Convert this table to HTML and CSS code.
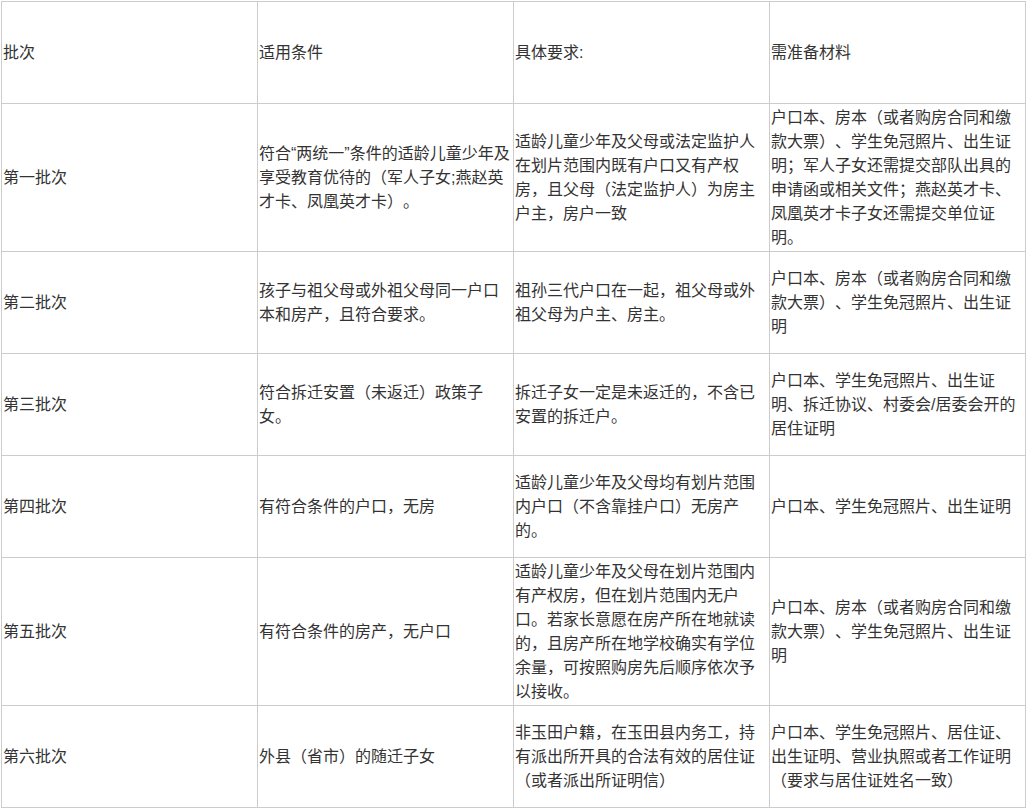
FILE: index.html
```html
<!DOCTYPE html>
<html lang="zh-CN">
<head>
<meta charset="utf-8">
<title>批次</title>
<link rel="stylesheet" href="styles.css">
</head>
<body>
<table class="batch-table">
  <colgroup>
    <col class="col"><col class="col"><col class="col"><col class="col">
  </colgroup>
  <tbody>
    <tr class="row">
      <td>批次</td>
      <td>适用条件</td>
      <td>具体要求:</td>
      <td>需准备材料</td>
    </tr>
    <tr class="row">
      <td>第一批次</td>
      <td>符合“两统一”条件的适龄儿童少年及享受教育优待的（军人子女;燕赵英才卡、凤凰英才卡）。</td>
      <td>适龄儿童少年及父母或法定监护人在划片范围内既有户口又有产权房，且父母（法定监护人）为房主户主，房户一致</td>
      <td>户口本、房本（或者购房合同和缴款大票）、学生免冠照片、出生证明；军人子女还需提交部队出具的申请函或相关文件；燕赵英才卡、凤凰英才卡子女还需提交单位证明。</td>
    </tr>
    <tr class="row">
      <td>第二批次</td>
      <td>孩子与祖父母或外祖父母同一户口本和房产，且符合要求。</td>
      <td>祖孙三代户口在一起，祖父母或外祖父母为户主、房主。</td>
      <td>户口本、房本（或者购房合同和缴款大票）、学生免冠照片、出生证明</td>
    </tr>
    <tr class="row">
      <td>第三批次</td>
      <td>符合拆迁安置（未返迁）政策子女。</td>
      <td>拆迁子女一定是未返迁的，不含已安置的拆迁户。</td>
      <td>户口本、学生免冠照片、出生证明、拆迁协议、村委会/居委会开的居住证明</td>
    </tr>
    <tr class="row">
      <td>第四批次</td>
      <td>有符合条件的户口，无房</td>
      <td>适龄儿童少年及父母均有划片范围内户口（不含靠挂户口）无房产的。</td>
      <td>户口本、学生免冠照片、出生证明</td>
    </tr>
    <tr class="row">
      <td>第五批次</td>
      <td>有符合条件的房产，无户口</td>
      <td>适龄儿童少年及父母在划片范围内有产权房，但在划片范围内无户口。若家长意愿在房产所在地就读的，且房产所在地学校确实有学位余量，可按照购房先后顺序依次予以接收。</td>
      <td>户口本、房本（或者购房合同和缴款大票）、学生免冠照片、出生证明</td>
    </tr>
    <tr class="row">
      <td>第六批次</td>
      <td>外县（省市）的随迁子女</td>
      <td>非玉田户籍，在玉田县内务工，持有派出所开具的合法有效的居住证（或者派出所证明信）</td>
      <td>户口本、学生免冠照片、居住证、出生证明、营业执照或者工作证明（要求与居住证姓名一致）</td>
    </tr>
  </tbody>
</table>
</body>
</html>
```

FILE: styles.css
```css
html, body {
  margin: 0;
  padding: 0;
  background: #ffffff;
}

body {
  padding: 1px 0 0 1px;
}

.batch-table {
  width: 1025px;
  table-layout: fixed;
  border-collapse: collapse;
  font-family: "Liberation Sans", "Noto Sans CJK SC", sans-serif;
  font-size: 16px;
  line-height: 24px;
  color: #333333;
  text-spacing-trim: space-all;
}

.col {
  width: 25%;
}

.batch-table td {
  border: 1px solid #cccccc;
  padding: 1.4px 1px;
  height: 98.4px;
  vertical-align: middle;
  text-align: left;
  word-break: break-all;
  text-spacing-trim: space-all;
}
```
